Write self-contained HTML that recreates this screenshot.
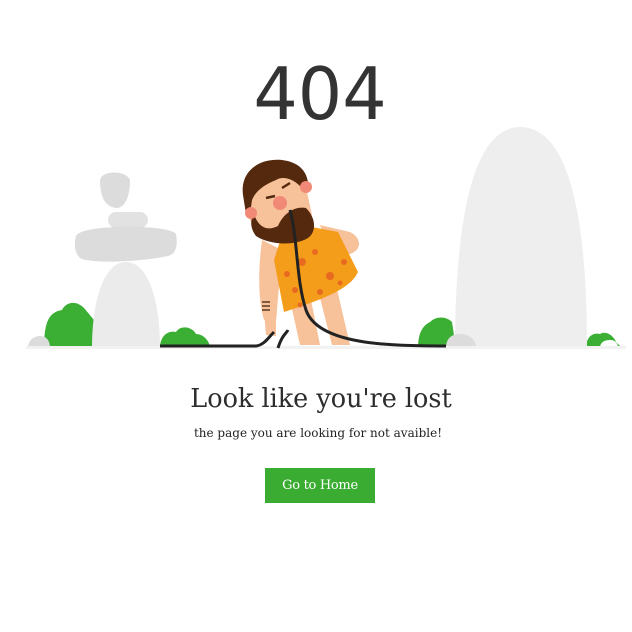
<!DOCTYPE html>
<html><head><meta charset="utf-8"><style>
html,body{margin:0;padding:0;background:#fff;width:632px;height:632px;overflow:hidden}
.t{position:absolute;left:0;width:632px;text-align:center;font-family:"DejaVu Serif","Liberation Serif",serif;color:#333}
.n{top:52px;left:4px;font-size:72px;color:#333;font-family:"DejaVu Sans","Liberation Sans",sans-serif;font-weight:normal;transform:scaleX(.97)}
.h{top:384px;left:5px;font-size:26px;color:#2d2d2d;transform:scaleX(.98)}
.p{top:425px;left:2px;font-size:12.5px;color:#222;transform:scaleX(.96)}
.b{position:absolute;left:265px;top:468px;width:110px;height:35px;background:#39ac31;color:#fff;font-family:"DejaVu Serif",serif;font-size:13px;line-height:35px;text-align:center;letter-spacing:-.3px}
</style></head><body>
<div class="t n">404</div>
<svg style="position:absolute;left:0;top:0" width="632" height="632">
<g fill="#3aaf34">
<path d="M44 348 C44 320 50 312 62 310 C66 302 76 300 84 308 L94 320 L94 348Z"/>
<path d="M160 348 C160 336 168 330 176 332 C180 325 192 326 196 334 C204 334 210 342 210 348Z"/>
<path d="M418 348 C418 334 422 326 430 322 C436 316 446 316 452 322 L456 348Z"/>
<path d="M586 348 C586 338 592 332 600 334 C606 330 614 336 616 342 L622 348Z"/>
</g>
<g>
<path d="M100 180 C102 170 126 170 130 180 C130 195 126 206 118 208 C104 208 100 195 100 180Z" fill="#dcdcdc"/>
<rect x="108" y="212" width="40" height="16" rx="8" fill="#e2e2e2"/>
<path d="M76 236 C80 224 170 224 176 234 C178 246 176 254 168 256 C140 262 90 264 80 258 C74 252 74 244 76 236Z" fill="#dcdcdc"/>
<path d="M92 348 C92 300 104 262 126 262 C148 262 160 300 160 348Z" fill="#ebebeb"/>
<path d="M455 348 C455 240 468 127 520 127 C575 127 587 240 587 348Z" fill="#eeeeee"/>
<path d="M28 348 C28 340 34 336 40 336 C46 336 50 340 50 348Z" fill="#dcdcdc"/>
<path d="M446 348 C446 338 452 334 460 334 C470 334 476 340 476 348Z" fill="#dcdcdc"/>
<path d="M600 348 C600 342 605 340 610 340 C616 340 618 344 618 348Z" fill="#fff"/>
</g>
<rect x="26" y="346" width="600" height="3" fill="#f2f2f2"/>
<g>
<path d="M262 240 C258 270 258 300 264 320 L276 322 L282 250Z" fill="#f7c29a"/>
<path d="M290 300 L300 345 L320 345 L310 295Z" fill="#f7c29a"/>
<path d="M318 290 L332 345 L350 345 L336 285Z" fill="#f7c29a"/>
<path d="M320 225 L350 232 C362 238 362 250 350 254 L330 252Z" fill="#f7c29a"/>
<path d="M286 222 L338 232 L358 272 C350 290 320 300 284 312 L274 260Z" fill="#f49d1a"/>
<g fill="#e86a20"><circle cx="302" cy="262" r="4"/><circle cx="315" cy="252" r="3"/><circle cx="330" cy="276" r="4"/><circle cx="295" cy="290" r="3"/><circle cx="320" cy="292" r="3"/><circle cx="344" cy="262" r="3"/><circle cx="287" cy="274" r="3"/><circle cx="300" cy="305" r="2.5"/><circle cx="340" cy="283" r="2.5"/></g>
<path d="M264 312 L266 335 L276 336 L276 312Z" fill="#f7c29a"/>
<path d="M262 302 h8 M262 306 h8 M262 310 h8" stroke="#5a3a22" stroke-width="1.5"/>
<path d="M248 185 C252 170 292 164 304 178 L312 215 C300 240 270 244 256 235 L248 214Z" fill="#f7c29a"/>
<path d="M243 195 C240 172 258 158 282 160 C298 162 306 170 308 182 L300 186 C292 178 282 176 276 180 C266 184 256 190 252 200 L250 214 L246 214Z" fill="#55290e"/>
<path d="M254 214 C258 226 266 232 278 226 C284 212 296 206 306 208 C318 220 316 236 304 240 C290 246 268 244 256 236 C250 228 250 220 254 214Z" fill="#55290e"/>
<circle cx="251" cy="213" r="6" fill="#f08a76"/>
<circle cx="306" cy="187" r="6" fill="#f08a76"/>
<circle cx="280" cy="203" r="7" fill="#f08a76"/>
<path d="M282 188 l8 -5 M266 198 l9 -2" stroke="#55290e" stroke-width="2.5"/>
<path d="M290 210 C298 240 296 280 306 310 C318 345 390 346 446 346" stroke="#222" stroke-width="3" fill="none"/>
<path d="M160 346 L256 346 C264 345 268 338 274 332 M278 348 C282 335 286 334 288 330" stroke="#222" stroke-width="3" fill="none"/>
</g>
</svg>
<div class="t h">Look like you're lost</div>
<div class="t p">the page you are looking for not avaible!</div>
<div class="b">Go to Home</div>
</body></html>
